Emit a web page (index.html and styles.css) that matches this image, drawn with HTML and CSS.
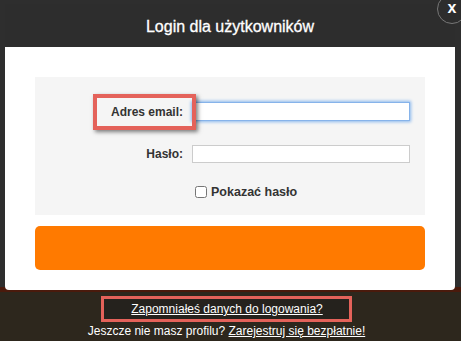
FILE: index.html
```html
<!DOCTYPE html>
<html lang="pl">
  <head>
    <meta charset="UTF-8" />
    <meta name="viewport" content="width=device-width, initial-scale=1.0" />
    <title>Login dla użytkowników</title>
    <link rel="stylesheet" href="styles.css">
  </head>
  <body>
    <div class="modal">
      <div class="modal-header">
        <h1>Login dla użytkowników</h1>
        <button class="close">x</button>
      </div>
      <div class="modal-body">
        <form class="login-form">
          <label for="email" class="highlight">Adres email:</label>
          <input type="text" id="email" class="focused" />
          <label for="password">Hasło:</label>
          <input type="password" id="password" />
          <span></span>
          <label class="show-pass"><input type="checkbox" /> Pokazać hasło</label>
        </form>
        <button class="submit"></button>
      </div>
    </div>

    <div class="links">
      <a href="#" class="boxed">Zapomniałeś danych do logowania?</a>
      <p>Jeszcze nie masz profilu? <a href="#">Zarejestruj się bezpłatnie!</a></p>
    </div>
  </body>
</html>
```

FILE: styles.css
```css
body {
  margin: 0;
  padding-top: 4px;
  font-family: "Liberation Sans", Arial, sans-serif;
  background: linear-gradient(to bottom, #2e2e2e 0, #2e2e2e 287px, #4a1a0c 287px, #4a1a0c 292px, #2d271d 292px);
  height: 337px;
  overflow: hidden;
}

.modal {
  margin: 0 6px 0 5px;
  position: relative;
}

.modal-header {
  height: 43px;
  background-color: #2d2d2d;
  display: flex;
  align-items: center;
  justify-content: center;
}

h1 {
  margin: 2px 0 0 0;
  font-size: 16px;
  font-weight: normal;
  color: #fff;
  -webkit-text-stroke: 0.3px #fff;
}

.close {
  position: absolute;
  top: -10px;
  right: -12px;
  width: 30px;
  height: 30px;
  border-radius: 50%;
  border: 1px solid #777;
  background-color: #2d2d2d;
  color: #fff;
  font-family: "Liberation Sans", Arial, sans-serif;
  font-size: 16px;
  font-weight: bold;
  padding: 0 0 2px 0;
}

.modal-body {
  background-color: #fff;
  padding: 30px 30px 20px 30px;
  border-radius: 0 0 4px 4px;
}

.login-form {
  background-color: #f5f5f5;
  height: 138px;
  box-sizing: border-box;
  padding: 25px 15px 0 0;
  display: grid;
  grid-template-columns: 148px 1fr;
  grid-template-rows: 19px 18px 14px;
  align-content: start;
  column-gap: 9px;
  row-gap: 24px;
  align-items: center;
}

.login-form label {
  text-align: right;
  font-size: 12px;
  font-weight: bold;
  color: #333;
}

.login-form input[type="text"],
.login-form input[type="password"] {
  height: 18px;
  box-sizing: border-box;
  border: 1px solid #ccc;
  margin: 0;
  padding: 0 3px;
}

.login-form input.focused {
  height: 19px;
  border: 1px solid #86b3ea;
  box-shadow: 0 0 3px 1px #8ab8ee;
  outline: none;
}

.highlight {
  position: relative;
}

.highlight::after {
  content: "";
  position: absolute;
  left: 58px;
  right: -13px;
  top: -11px;
  bottom: -11px;
  border: 4px solid #e4625a;
  box-shadow: 2px 2px 4px rgba(0, 0, 0, 0.5);
}

.login-form .show-pass {
  text-align: left;
  font-size: 12.5px;
  display: flex;
  align-items: center;
  gap: 2px;
  margin-top: -4px;
}

.show-pass input {
  margin: 0 2px 0 3px;
  width: 12px;
  height: 12px;
}

.submit {
  display: block;
  width: 100%;
  height: 44px;
  margin-top: 11px;
  border: none;
  border-radius: 5px;
  background-color: #ff7a00;
}

.links {
  text-align: center;
  font-size: 12px;
  color: #fff;
  margin-top: 6px;
  margin-left: -8px;
}

.links a {
  color: #fff;
}

.boxed {
  display: inline-block;
  border: 3px solid #e4625a;
  padding: 3px 26px 3px 27px;
  background-color: #25221d;
}

.links p {
  margin: 2px 0 0 0;
}
```
